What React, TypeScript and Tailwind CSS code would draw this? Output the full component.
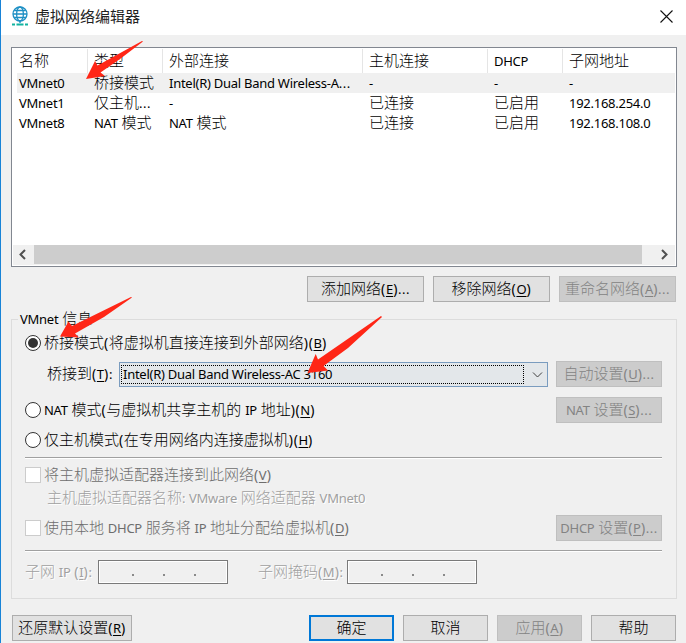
import { ReactNode } from 'react'
import clsx from 'clsx'

const columns = ['名称', '类型', '外部连接', '主机连接', 'DHCP', '子网地址']

const networks = [
	['VMnet0', '桥接模式', 'Intel(R) Dual Band Wireless-A...', '-', '-', '-'],
	['VMnet1', '仅主机...', '-', '已连接', '已启用', '192.168.254.0'],
	['VMnet8', 'NAT 模式', 'NAT 模式', '已连接', '已启用', '192.168.108.0'],
]

const arrows = [
	'86,79 95,61 97.5,65.5 142,41 143,41.5 120,59 100.5,72.500 105,76',
	'60,336.500 68.5,321.500 72,326 131,297 132,297.500 104,317 75,333.500 79,337.500',
	'307.5,373 315.7,354 318,359.500 381,316 382,317 348,348 323.5,366 328,370.500',
]

// '&' marks the access key, as in a Windows resource string
const Text = ({ children, className }: { children: string, className?: string }) => {
	const mixed = /[\u4e00-\u9fff]|&/.test(children)
	const parts = children.split(mixed ? /([\u4e00-\u9fff]+|&.|[()]+| |\.{3})/ : /(\.{3})/).filter(Boolean)

	return (
		<span className={clsx('whitespace-pre leading-[20px] inline-flex items-center', className)}>
			{parts.map((part, i) => {
				if (part.startsWith('&')) {
					return <span key={i} className="text-[13px] underline underline-offset-2">{part.slice(1)}</span>
				}
				if (/[\u4e00-\u9fff]/.test(part)) {
					return <span key={i} className="text-[15px] font-light relative -top-px">{part}</span>
				}
				if (part === '...') {
					return <span key={i} className="text-[13px] tracking-[0.5px]">{part}</span>
				}
				if (mixed && part === ' ') {
					return <span key={i} className="text-[13px] tracking-[0.4px]">{part}</span>
				}
				if (mixed && /^[()]+$/.test(part)) {
					return <span key={i} className="text-[14px] tracking-[0.6px]">{part}</span>
				}
				return <span key={i} className="text-[13px] tracking-[-0.26px]">{part}</span>
			})}
		</span>
	)
}

interface ButtonProps {
	label: string
	className?: string
	disabled?: boolean
	primary?: boolean
}

const Button = ({ label, className, disabled, primary }: ButtonProps) => (
	<button
		disabled={disabled}
		className={clsx(
			'h-[26px] flex items-center justify-center shrink-0',
			disabled && 'bg-[#cccccc] border border-[#bfbfbf] text-[#838383]',
			primary && 'bg-[#e1e1e1] border-2 border-[#0078d7]',
			!disabled && !primary && 'bg-[#e1e1e1] border border-[#adadad]',
			className
		)}
	>
		<Text>{label}</Text>
	</button>
)

const Row = ({ children, className }: { children: ReactNode, className?: string }) => (
	<div className={clsx('flex items-center h-[26px]', className)}>{children}</div>
)

const Radio = ({ label, checked }: { label: string, checked?: boolean }) => (
	<label className="flex items-center">
		<span className="w-4 h-4 rounded-full border border-[#333333] bg-white flex items-center justify-center mr-[3px]">
			{checked && <span className="w-[10px] h-[10px] rounded-full bg-[#333333]" />}
		</span>
		<Text>{label}</Text>
	</label>
)

const Checkbox = ({ label }: { label: string }) => (
	<label className="flex items-center text-[#6d6d6d]">
		<span className="w-4 h-4 border border-[#cccccc] bg-white mr-[3px]" />
		<Text>{label}</Text>
	</label>
)

const IpField = () => (
	<div className="w-[130px] h-6 border border-[#7a7a7a] bg-[#f0f0f0] outline outline-1 -outline-offset-2 outline-white flex items-center gap-[29px] pl-[33px] pt-[5px]">
		<span className="w-[2px] h-[2px] bg-[#8a8a8a]" />
		<span className="w-[2px] h-[2px] bg-[#8a8a8a]" />
		<span className="w-[2px] h-[2px] bg-[#8a8a8a]" />
	</div>
)

const Separator = () => <div className="h-[2px] w-[637px] border-t border-[#a0a0a0] bg-white" />

const Chevron = ({ points, className }: { points: string, className?: string }) => (
	<svg width="11" height="11" viewBox="0 0 11 11" fill="none" stroke="currentColor" className={className}>
		<polyline points={points} />
	</svg>
)

const TitleBar = () => (
	<div className="h-[35px] bg-white flex items-center justify-between pl-[10px] pr-[13px]">
		<div className="flex items-center">
			<svg width="18" height="20" viewBox="0 0 18 20" fill="none" className="-mt-[4px]">
				<g stroke="#1d8fc4" strokeWidth="1.3">
					<circle cx="9" cy="8" r="7" />
					<ellipse cx="9" cy="8" rx="3.4" ry="7" />
					<path d="M9 15v2M2 8h14M3.3 4.5h11.4M3.3 11.5h11.4" />
				</g>
				<path d="M1 18.500h3M5.500 18.500h7M14 18.500h3" stroke="#12b3a0" strokeWidth="2" />
			</svg>
			<span className="text-[15px] text-[#222222] ml-[6px] -mt-[3px] leading-5">虚拟网络编辑器</span>
		</div>
		<svg width="13" height="13" viewBox="0 0 13 13" stroke="#111111" strokeWidth="1.1" className="-mt-[3px]">
			<path d="M.5 .5l12 12M12.500 .5l-12 12" />
		</svg>
	</div>
)

const NetworkList = () => (
	<div className="h-[220px] w-[666px] border border-[#828790] bg-white p-px flex flex-col">
		<div className="grid grid-cols-[75px_75px_200px_125px_75px_1fr] h-6">
			{columns.map((column, i) => (
				<div key={column} className={clsx('flex items-center pl-[6px]', i < 5 && 'border-r border-[#e5e5e5]')}>
					<Text>{column}</Text>
				</div>
			))}
		</div>
		{networks.map((network, row) => (
			<div key={network[0]} className={clsx('grid grid-cols-[75px_75px_200px_125px_75px_1fr] h-5 ml-1', row === 0 && 'bg-[#f0f0f0]')}>
				{network.map((cell, i) => <Text key={i} className="pl-[2px]">{cell}</Text>)}
			</div>
		))}
		<div className="mt-auto h-[20px] bg-[#f0f0f0] flex items-start">
			<Chevron points="7,1 2.500,5.500 7,10" className="w-[21px] mt-[4px] stroke-2 text-[#505050]" />
			<div className="flex-1 h-[19px] bg-[#cdcdcd]" />
			<div className="w-[33px] flex justify-end pr-[5px] mt-[4px]">
				<Chevron points="3,1 7.500,5.500 3,10" className="stroke-2 text-[#505050]" />
			</div>
		</div>
	</div>
)

const NetworkInfo = () => (
	<div className="h-[280px] w-[666px] mt-[17px] border border-[#dcdcdc] pl-[13px] flex flex-col items-start">
		<div className="-mt-[11px] -ml-[7px] bg-[#f0f0f0] px-[2px] h-[20px] flex"><Text>VMnet 信息</Text></div>
		<Row className="mt-px"><Radio checked label="桥接模式(将虚拟机直接连接到外部网络)(&B)" /></Row>
		<Row className="mt-[5px]">
			<Text className="w-[94px] pl-[22px]">桥接到(&T):</Text>
			<div className="w-[429px] h-[25px] border border-[#7a9cbf] bg-[#e3e7ea] flex items-center justify-between p-px">
				<div className="w-[403px] h-[19px] border border-dotted border-black flex items-center pl-px">
					<Text>Intel(R) Dual Band Wireless-AC 3160</Text>
				</div>
				<Chevron points="1,3.500 5.500,8 10,3.500" className="mr-[3px] text-[#404040]" />
			</div>
			<Button disabled label="自动设置(&U)..." className="w-[106px] ml-2" />
		</Row>
		<Row className="mt-[10px] w-[637px] justify-between">
			<Radio label="NAT 模式(与虚拟机共享主机的 IP 地址)(&N)" />
			<Button disabled label="NAT 设置(&S)..." className="w-[106px]" />
		</Row>
		<Row className="mt-[4px] mb-[4px]"><Radio label="仅主机模式(在专用网络内连接虚拟机)(&H)" /></Row>
		<Separator />
		<Row className="mt-[3px]"><Checkbox label="将主机虚拟适配器连接到此网络(&V)" /></Row>
		<Row className="-mt-[3px] pl-[22px] text-[#a0a0a0] [text-shadow:1px_1px_0_#fff]">
			<Text>主机虚拟适配器名称: VMware 网络适配器 VMnet0</Text>
		</Row>
		<Row className="mt-[4px] mb-[9px] w-[637px] justify-between">
			<Checkbox label="使用本地 DHCP 服务将 IP 地址分配给虚拟机(&D)" />
			<Button disabled label="DHCP 设置(&P)..." className="w-[106px]" />
		</Row>
		<Separator />
		<Row className="mt-[7px] text-[#a0a0a0]">
			<Text className="w-[73px] [text-shadow:1px_1px_0_#fff]">子网 IP (&I):</Text>
			<IpField />
			<Text className="w-[89px] ml-[30px] [text-shadow:1px_1px_0_#fff]">子网掩码(&M):</Text>
			<IpField />
		</Row>
	</div>
)

const App = () => (
	<div className="relative w-[686px] h-[643px] overflow-hidden bg-[#f0f0f0] border-l border-[#1883d7] text-black font-['Noto_Sans','Noto_Sans_CJK_SC',sans-serif]">
		<TitleBar />
		<div className="pl-[10px] pt-3 flex flex-col">
			<NetworkList />
			<div className="flex justify-end gap-[9px] mt-[9px] w-[665px]">
				<Button label="添加网络(&E)..." className="w-[117px]" />
				<Button label="移除网络(&O)" className="w-[117px]" />
				<Button disabled label="重命名网络(&A)..." className="w-[117px]" />
			</div>
			<NetworkInfo />
			<div className="flex gap-[9px] mt-4 pl-px w-[665px]">
				<Button label="还原默认设置(&R)" className="w-[120px] mr-auto" />
				<Button primary label="确定" className="w-[85px]" />
				<Button label="取消" className="w-[85px]" />
				<Button disabled label="应用(&A)" className="w-[85px]" />
				<Button label="帮助" className="w-[85px]" />
			</div>
		</div>
		<svg className="absolute top-0 -left-px pointer-events-none" width="686" height="643" fill="#ff2616">
			{arrows.map(points => <polygon key={points} points={points} />)}
		</svg>
	</div>
)

export default App
